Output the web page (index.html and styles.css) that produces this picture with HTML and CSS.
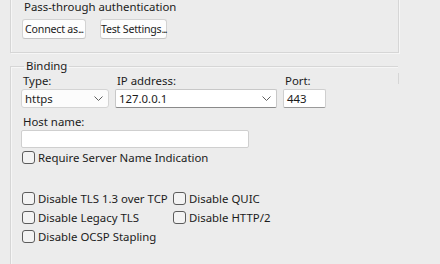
FILE: index.html
```html
<!DOCTYPE html>
<html>
<head>
<meta charset="utf-8">
<link rel="stylesheet" href="styles.css">
</head>
<body>
<div class="auth-group">
  <div class="auth-title">Pass-through authentication</div>
  <div class="btn-row">
    <button class="btn btn-connect">Connect as<span class="dots">...</span></button>
    <button class="btn btn-test">Test Settings<span class="dots">...</span></button>
  </div>
</div>

<fieldset class="binding">
  <legend class="legend">Binding</legend>
  <div class="row-fields">
    <div class="field f-type">
      <div class="label">Type:</div>
      <div class="combo combo-ro"><span class="val">https</span><svg class="chev" width="9" height="5" viewBox="0 0 9 5"><path d="M0.5 0.5 L4.5 4.5 L8.5 0.5" fill="none" stroke="#5f5f5f" stroke-width="1"/></svg></div>
    </div>
    <div class="field f-ip">
      <div class="label">IP address:</div>
      <div class="combo combo-edit"><span class="val">127.0.0.1</span><svg class="chev" width="9" height="5" viewBox="0 0 9 5"><path d="M0.5 0.5 L4.5 4.5 L8.5 0.5" fill="none" stroke="#5f5f5f" stroke-width="1"/></svg></div>
    </div>
    <div class="field f-port">
      <div class="label">Port:</div>
      <div class="textbox"><span class="val">443</span></div>
    </div>
  </div>
  <div class="field f-host">
    <div class="label">Host name:</div>
    <div class="textbox host-box"></div>
  </div>
  <label class="check sni"><span class="box"></span>Require Server Name Indication</label>
  <div class="check-grid">
    <label class="check"><span class="box"></span>Disable TLS 1.3 over TCP</label>
    <label class="check"><span class="box"></span>Disable QUIC</label>
    <label class="check"><span class="box"></span>Disable Legacy TLS</label>
    <label class="check"><span class="box"></span>Disable HTTP/2</label>
    <label class="check"><span class="box"></span>Disable OCSP Stapling</label>
  </div>
</fieldset>
</body>
</html>
```

FILE: styles.css
```css
html, body {
  margin: 0;
  padding: 0;
  background: #ececec;
  overflow: hidden;
}
body {
  width: 440px;
  height: 264px;
  font-family: "Noto Sans", "Open Sans", sans-serif;
  font-size: 11.4px;
  color: #1b1b1b;
  white-space: nowrap;
}
.auth-group {
  margin: -20px 41px 0 10px;
  height: 73px;
  border: 1px solid #d6d6d6;
  box-shadow: inset 1px 1px 0 #f6f6f6, 1px 1px 0 #f6f6f6;
  padding: 0 0 0 11px;
  box-sizing: border-box;
}
.auth-title {
  margin-top: 18px;
  line-height: 16px;
  padding-left: 2px;
}
.btn-row {
  display: flex;
  gap: 14px;
  margin-top: 4px;
}
.btn {
  font: inherit;
  font-size: 10.6px;
  letter-spacing: -0.2px;
  color: #1b1b1b;
  background: #fdfdfd;
  border: 1px solid #d3d3d3;
  border-bottom-color: #c4c4c4;
  border-radius: 3px;
  height: 20px;
  padding: 0;
  line-height: 16px;
  white-space: nowrap;
}
.dots { letter-spacing: -1.2px; }
.btn-connect { width: 64px; }
.btn-test { width: 67px; }

.binding {
  position: relative;
  margin: 5px 0 0 10px;
  width: 388px;
  height: 210px;
  box-sizing: border-box;
  border: 1px solid #d6d6d6;
  border-right: none;
  border-bottom: none;
  box-shadow: inset 1px 1px 0 #f6f6f6;
  padding: 0 0 0 10px;
  min-width: 0;
}
.binding::after {
  content: "";
  position: absolute;
  right: -1px;
  top: -1px;
  width: 1px;
  height: 11px;
  background: #d6d6d6;
}
.legend {
  padding: 0 2px;
  margin-left: 3px;
  line-height: 16px;
}
.row-fields {
  display: flex;
  gap: 6px;
  margin-top: -1px;
}
.label {
  line-height: 16px;
  padding-left: 2px;
}
.f-type { width: 88px; }
.f-ip { width: 162px; }
.f-port { width: 43px; }
.combo, .textbox {
  box-sizing: border-box;
  height: 19px;
  display: flex;
  align-items: center;
  position: relative;
  padding-left: 3px;
}
.val { line-height: 16px; }
.combo-ro {
  background: #fcfcfc;
  border: 1px solid #d4d4d4;
  border-radius: 3px;
}
.combo-edit {
  background: #ffffff;
  border: 1px solid #c8c8c8;
  border-bottom-color: #8a8a8a;
  border-radius: 2px;
}
.textbox {
  background: #ffffff;
  border: 1px solid #cfcfcf;
  border-bottom-color: #9a9a9a;
  border-radius: 2px;
}
.chev {
  margin-left: auto;
  margin-right: 5px;
}
.f-host { margin-top: 6px; width: 228px; }
.host-box { height: 18px; border-bottom-color: #cfcfcf; }
.check {
  display: flex;
  align-items: center;
  gap: 3px;
  line-height: 16px;
  height: 19px;
  padding-left: 1px;
}
.box {
  width: 11px;
  height: 11px;
  border: 1px solid #5c5c5c;
  border-radius: 3px;
  background: #f3f3f3;
  flex: none;
}
.sni { margin-top: 0; }
.check-grid {
  margin-top: 22px;
  display: grid;
  grid-template-columns: 151px auto;
}
```
